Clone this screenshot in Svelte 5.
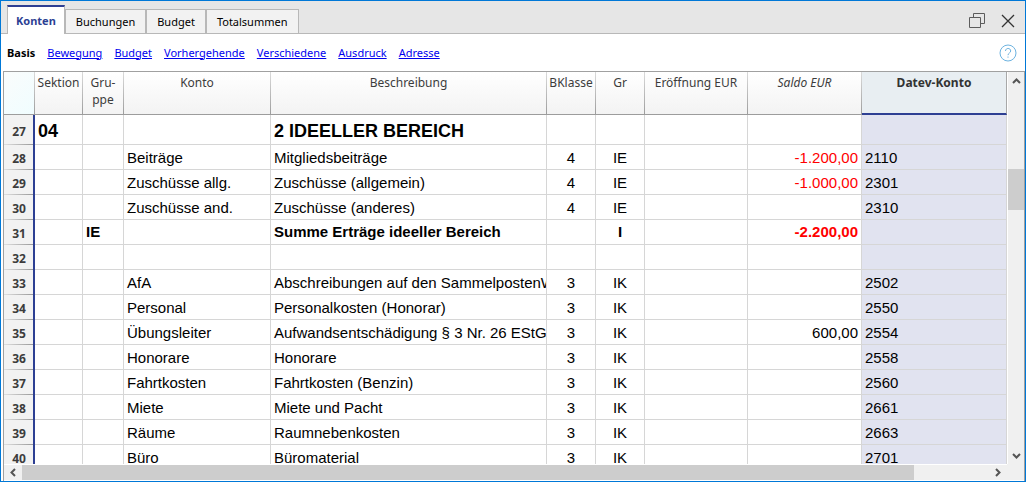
<script>
  const tabs = ['Konten', 'Buchungen', 'Budget', 'Totalsummen'];
  const views = ['Bewegung', 'Budget', 'Vorhergehende', 'Verschiedene', 'Ausdruck', 'Adresse'];
  let active = $state('Konten');

  const rows = [
    { n: 27, kind: 'title', sektion: '04', text: '2 IDEELLER BEREICH' },
    { n: 28, konto: 'Beiträge', text: 'Mitgliedsbeiträge', bk: '4', gr: 'IE', saldo: '-1.200,00', datev: '2110' },
    { n: 29, konto: 'Zuschüsse allg.', text: 'Zuschüsse (allgemein)', bk: '4', gr: 'IE', saldo: '-1.000,00', datev: '2301' },
    { n: 30, konto: 'Zuschüsse and.', text: 'Zuschüsse (anderes)', bk: '4', gr: 'IE', datev: '2310' },
    { n: 31, kind: 'sum', gruppe: 'IE', text: 'Summe Erträge ideeller Bereich', gr: 'I', saldo: '-2.200,00' },
    { n: 32 },
    { n: 33, konto: 'AfA', text: 'Abschreibungen auf den SammelpostenW', bk: '3', gr: 'IK', datev: '2502' },
    { n: 34, konto: 'Personal', text: 'Personalkosten (Honorar)', bk: '3', gr: 'IK', datev: '2550' },
    { n: 35, konto: 'Übungsleiter', text: 'Aufwandsentschädigung § 3 Nr. 26 EStG', bk: '3', gr: 'IK', saldo: '600,00', datev: '2554' },
    { n: 36, konto: 'Honorare', text: 'Honorare', bk: '3', gr: 'IK', datev: '2558' },
    { n: 37, konto: 'Fahrtkosten', text: 'Fahrtkosten (Benzin)', bk: '3', gr: 'IK', datev: '2560' },
    { n: 38, konto: 'Miete', text: 'Miete und Pacht', bk: '3', gr: 'IK', datev: '2661' },
    { n: 39, konto: 'Räume', text: 'Raumnebenkosten', bk: '3', gr: 'IK', datev: '2663' },
    { n: 40, konto: 'Büro', text: 'Büromaterial', bk: '3', gr: 'IK', datev: '2701' }
  ];
</script>

<div class="window">
  <header class="bar">
    <div class="tabs" role="tablist">
      {#each tabs as tab}
        <button role="tab" class="tab" class:active={active === tab} aria-selected={active === tab} onclick={() => (active = tab)}>{tab}</button>
      {/each}
    </div>
    <div class="tools">
      <button class="icon" aria-label="Fenster lösen">
        <svg width="16" height="16" viewBox="0 0 16 16" fill="none" stroke="#5c5c5c"><path d="M.5 4.500h11v10H.5zM4.500 4V.5h11v10H12" /></svg>
      </button>
      <button class="icon" aria-label="Schliessen">
        <svg width="14" height="14" viewBox="0 0 14 14" fill="none" stroke="#333" stroke-width="1.300"><path d="M1 1l12 12M13 1L1 13" /></svg>
      </button>
    </div>
  </header>

  <nav class="views">
    <strong>Basis</strong>
    {#each views as view}
      <a href="#{view}">{view}</a>
    {/each}
    <button class="icon help" aria-label="Hilfe">
      <svg width="18" height="18" viewBox="0 0 18 18" fill="none" stroke="#6db3e0"><circle cx="9" cy="9" r="8" /><path d="M6.500 7c0-3.400 5.200-3.400 5.200 0 0 1.900-2.700 2-2.700 4.200M9 12.500v1.200" /></svg>
    </button>
  </nav>

  <main class="grid">
    <div class="viewport">
      <table>
        <colgroup>
          <col class="c-num" /><col class="c-sek" /><col class="c-grp" /><col class="c-konto" /><col />
          <col class="c-small" /><col class="c-small" /><col class="c-open" /><col class="c-saldo" /><col class="c-datev" />
        </colgroup>
        <thead>
          <tr>
            <td class="corner"></td>
            <th scope="col">Sektion</th>
            <th scope="col">Gru-<br />ppe</th>
            <th scope="col">Konto</th>
            <th scope="col">Beschreibung</th>
            <th scope="col">BKlasse</th>
            <th scope="col">Gr</th>
            <th scope="col">Eröffnung EUR</th>
            <th scope="col" class="italic">Saldo EUR</th>
            <th scope="col" class="selected">Datev-Konto</th>
          </tr>
        </thead>
        <tbody>
          {#each rows as r}
            <tr class={r.kind}>
              <th scope="row">{r.n}</th>
              <td>{r.sektion ?? ''}</td>
              <td>{r.gruppe ?? ''}</td>
              <td>{r.konto ?? ''}</td>
              <td>{r.text ?? ''}</td>
              <td class="mid">{r.bk ?? ''}</td>
              <td class="mid">{r.gr ?? ''}</td>
              <td></td>
              <td class="num" class:neg={r.saldo?.startsWith('-')}>{r.saldo ?? ''}</td>
              <td class="datev">{r.datev ?? ''}</td>
            </tr>
          {/each}
        </tbody>
      </table>
    </div>

    <div class="vscroll">
      <button class="arrow" aria-label="Nach oben"><svg width="9" height="6" viewBox="0 0 9 6"><path d="M1 5l3.500-3.500L8 5" /></svg></button>
      <div class="vtrack">
        <span class="before"></span><span class="thumb"></span><span class="after"></span>
      </div>
      <button class="arrow" aria-label="Nach unten"><svg width="9" height="6" viewBox="0 0 9 6"><path d="M1 1l3.500 3.500L8 1" /></svg></button>
    </div>

    <div class="hscroll">
      <button class="arrow" aria-label="Nach links"><svg width="6" height="9" viewBox="0 0 6 9"><path d="M5 1L1.500 4.500 5 8" /></svg></button>
      <div class="htrack"><span class="thumb"></span><span class="rest"></span></div>
      <button class="arrow" aria-label="Nach rechts"><svg width="6" height="9" viewBox="0 0 6 9"><path d="M1 1l3.500 3.500L1 8" /></svg></button>
    </div>
    <div class="nook"></div>
  </main>
</div>

<style>
  :global(body) { margin: 0; background: #fff; }
  * { box-sizing: border-box; }
  button { font: inherit; margin: 0; padding: 0; border: 0; background: none; color: inherit; }
  svg { display: block; }

  .window {
    display: flex;
    flex-direction: column;
    height: 100vh;
    border: 1px solid #0078d7;
    background: #fff;
    font: 11px/16px "Noto Sans", "Open Sans", sans-serif;
    color: #000;
  }

  .bar {
    display: flex;
    justify-content: space-between;
    height: 33px;
    background: linear-gradient(#b8b8b8, #b8b8b8) bottom / 100% 1px no-repeat #e6e6e6;
  }
  .tabs { display: flex; align-items: flex-end; padding-left: 6px; }
  .tab {
    height: 25px;
    padding: 0 10px;
    border: 1px solid #b8b8b8;
    background: #f2f2f2;
  }
  .tab.active {
    height: 29px;
    padding: 0 8px;
    border-top: 2px solid #2d3f93;
    border-bottom: 0;
    background: #fff;
    color: #2d3f93;
    font-weight: 700;
  }
  .tools { display: flex; align-items: center; gap: 16px; padding: 6px 10px 0 0; }

  .views { display: flex; align-items: center; gap: 12px; height: 37px; padding: 0 8px 0 6px; }
  .views strong { font-weight: 700; }
  .views a { color: #0000ee; text-decoration: underline; }
  .help { margin-left: auto; }

  .grid {
    flex: 1;
    min-height: 0;
    display: grid;
    grid-template-columns: minmax(0, 1fr) 17px;
    grid-template-rows: minmax(0, 1fr) 16px;
    margin-left: 2px;
    border: 1px solid #a0a0a0;
    border-bottom: 0;
    padding-bottom: 1px;
  }
  .viewport { overflow: hidden; }

  table {
    width: 100%;
    table-layout: fixed;
    border-collapse: separate;
    border-spacing: 0;
    font: 15px/22px "Liberation Sans", Arial, sans-serif;
  }
  .c-num { width: 31px; }
  .c-sek { width: 48px; }
  .c-grp { width: 41px; }
  .c-konto { width: 147px; }
  .c-small { width: 49px; }
  .c-open { width: 103px; }
  .c-saldo { width: 114px; }
  .c-datev { width: 145px; }

  thead th, .corner {
    height: 43px;
    padding: 2px 0 0;
    vertical-align: top;
    border-right: 1px solid #a8a8a8;
    border-image: linear-gradient(#dcdcdc, #9c9c9c) 1;
    border-bottom: 1px solid #b4b4b4;
    background: linear-gradient(#fff, #f3f3f3);
    color: #3c3c3c;
    font: 12px/17px "Noto Sans", "Open Sans", sans-serif;
    text-align: center;
    white-space: nowrap;
  }
  thead .corner { background: linear-gradient(135deg, #fafcfc, #f0fdff); }
  thead .italic { font-style: italic; }
  thead .selected {
    border-image: none;
    border-bottom: 2px solid #2d3f93;
    background: #e8eef2;
    color: #333;
    font-weight: 700;
  }

  tbody td {
    height: 25px;
    padding: 2px 3px 0;
    border-right: 1px solid #d6d6d6;
    border-bottom: 1px solid #d6d6d6;
    overflow: hidden;
    white-space: nowrap;
  }
  tbody th {
    padding: 2px 0 0 1px;
    border-right: 2px solid #2d3f93;
    background: linear-gradient(90deg, #e0e0e0, #999) bottom / 100% 1px no-repeat #f2f2f2;
    color: #3c3c3c;
    font: bold 12px/22px "Noto Sans", "Open Sans", sans-serif;
    text-align: center;
  }
  .title td { height: 30px; padding-top: 3px; font-size: 18px; line-height: 26px; font-weight: 700; }
  .title th { padding-top: 3px; }
  .sum td { padding-top: 0; font-weight: 700; }
  .mid { text-align: center; }
  .num { text-align: right; }
  tbody .neg { color: #f00; }
  .datev { background: #e1e3f0; }

  .vscroll { display: flex; flex-direction: column; padding: 0 0 0 1px; background: linear-gradient(#f0f0f0, #f0f0f0) right / 16px 100% no-repeat #fff; }
  .arrow { display: grid; place-items: center; flex: none; width: 16px; height: 17px; background: #f0f0f0; }
  .arrow path { fill: none; stroke: #555; stroke-width: 2; }
  .vtrack { flex: 1; display: flex; flex-direction: column; }
  .thumb { background: #cdcdcd; }
  .before { flex: 80; }
  .vtrack .thumb { flex: 41; }
  .after { flex: 237; }

  .hscroll { display: flex; margin-top: 1px; background: #f0f0f0; }
  .hscroll .arrow { width: 18px; height: 15px; }
  .htrack { flex: 1; display: flex; }
  .htrack .thumb { flex: 892; }
  .rest { flex: 75; }
  .nook { background: #f0f0f0; }
</style>
